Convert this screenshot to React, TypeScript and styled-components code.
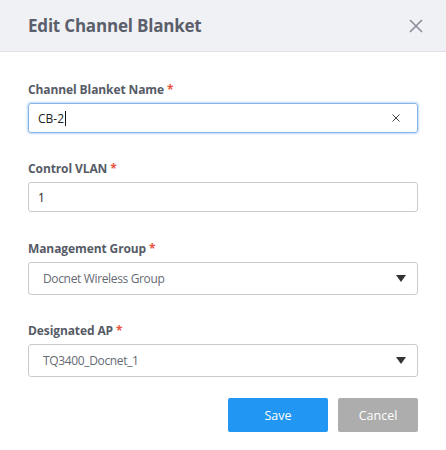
import React from "react";
import styled, { createGlobalStyle } from "styled-components";

const Global = createGlobalStyle`
  html, body { margin: 0; padding: 0; background: #ffffff; }
  body { font-family: "Open Sans", "Noto Sans", Arial, sans-serif; }
  * { box-sizing: border-box; }
`;

const Dialog = styled.div`
  width: 446px;
  height: 450px;
  background: #ffffff;
  display: flex;
  flex-direction: column;
`;

const Header = styled.div`
  height: 52px;
  background: #f0f1f5;
  border-bottom: 1px solid #e1e2e6;
  display: flex;
  align-items: center;
  justify-content: space-between;
  padding: 0 22px 0 28px;
`;

const Title = styled.h1`
  margin: 0;
  font-size: 17px;
  font-weight: 700;
  color: #5b5f6b;
  letter-spacing: -0.2px;
`;

const CloseButton = styled.button`
  width: 16px;
  height: 16px;
  padding: 0;
  border: none;
  background: transparent;
  display: flex;
  align-items: center;
  justify-content: center;
  cursor: pointer;
`;

const Body = styled.div`
  display: flex;
  flex-direction: column;
  padding: 30px 28px 0 28px;
`;

const Field = styled.div<{ $gap: number }>`
  display: flex;
  flex-direction: column;
  margin-bottom: ${(p) => p.$gap}px;
`;

const Label = styled.label`
  font-size: 12px;
  line-height: 16px;
  font-weight: 700;
  color: #565b66;
  margin-bottom: 5px;
  letter-spacing: -0.1px;
`;

const Star = styled.span`
  color: #e8533f;
  margin-left: 3px;
`;

const InputBox = styled.div<{ $focused?: boolean }>`
  height: 30px;
  border: 1px solid ${(p) => (p.$focused ? "#86b4e6" : "#c9cbd0")};
  border-radius: 3px;
  box-shadow: ${(p) => (p.$focused ? "0 0 2px 1px rgba(120,170,230,0.45)" : "none")};
  display: flex;
  align-items: center;
  padding: 0 10px 0 9px;
  font-size: 12px;
  color: #222;
`;

const InputText = styled.span`
  flex: 1;
  display: flex;
  align-items: center;
`;

const Caret = styled.span`
  display: inline-block;
  width: 1px;
  height: 15px;
  background: #111;
  margin-left: 1px;
`;

const ClearIcon = styled.span`
  display: flex;
  width: 10px;
  height: 10px;
  align-items: center;
  justify-content: center;
  margin-right: 6px;
`;

const SelectBox = styled.div`
  height: 33px;
  border: 1px solid #c9cbd0;
  border-radius: 3px;
  display: flex;
  align-items: center;
  justify-content: space-between;
  padding: 0 11px 0 14px;
  font-size: 12px;
  letter-spacing: -0.35px;
  color: #666a73;
`;

const Arrow = styled.span`
  width: 0;
  height: 0;
  border-left: 5px solid transparent;
  border-right: 5px solid transparent;
  border-top: 7px solid #333;
`;

const Actions = styled.div`
  display: flex;
  justify-content: flex-end;
  gap: 10px;
  margin-top: 21px;
`;

const Button = styled.button<{ $primary?: boolean }>`
  width: ${(p) => (p.$primary ? 100 : 80)}px;
  height: 34px;
  border: none;
  border-radius: 2px;
  background: ${(p) => (p.$primary ? "#2196f3" : "#adadad")};
  color: #ffffff;
  font-family: inherit;
  font-size: 12.5px;
  cursor: pointer;
`;

const CloseSvg = () => (
  <svg width="14" height="14" viewBox="0 0 14 14">
    <path d="M1 1 L13 13 M13 1 L1 13" stroke="#8a8e99" strokeWidth="1.6" />
  </svg>
);

const ClearSvg = () => (
  <svg width="8" height="8" viewBox="0 0 8 8">
    <path d="M0.5 0.5 L7.5 7.5 M7.5 0.5 L0.5 7.5" stroke="#444" strokeWidth="1" />
  </svg>
);

export default function App() {
  return (
    <>
      <Global />
      <Dialog>
        <Header>
          <Title>Edit Channel Blanket</Title>
          <CloseButton aria-label="Close">
            <CloseSvg />
          </CloseButton>
        </Header>
        <Body>
          <Field $gap={28}>
            <Label>
              Channel Blanket Name<Star>*</Star>
            </Label>
            <InputBox $focused>
              <InputText>
                CB-2
                <Caret />
              </InputText>
              <ClearIcon>
                <ClearSvg />
              </ClearIcon>
            </InputBox>
          </Field>
          <Field $gap={29}>
            <Label>
              Control VLAN<Star>*</Star>
            </Label>
            <InputBox>
              <InputText>1</InputText>
            </InputBox>
          </Field>
          <Field $gap={28}>
            <Label>
              Management Group<Star>*</Star>
            </Label>
            <SelectBox>
              <span>Docnet Wireless Group</span>
              <Arrow />
            </SelectBox>
          </Field>
          <Field $gap={0}>
            <Label>
              Designated AP<Star>*</Star>
            </Label>
            <SelectBox>
              <span>TQ3400_Docnet_1</span>
              <Arrow />
            </SelectBox>
          </Field>
          <Actions>
            <Button $primary>Save</Button>
            <Button>Cancel</Button>
          </Actions>
        </Body>
      </Dialog>
    </>
  );
}
